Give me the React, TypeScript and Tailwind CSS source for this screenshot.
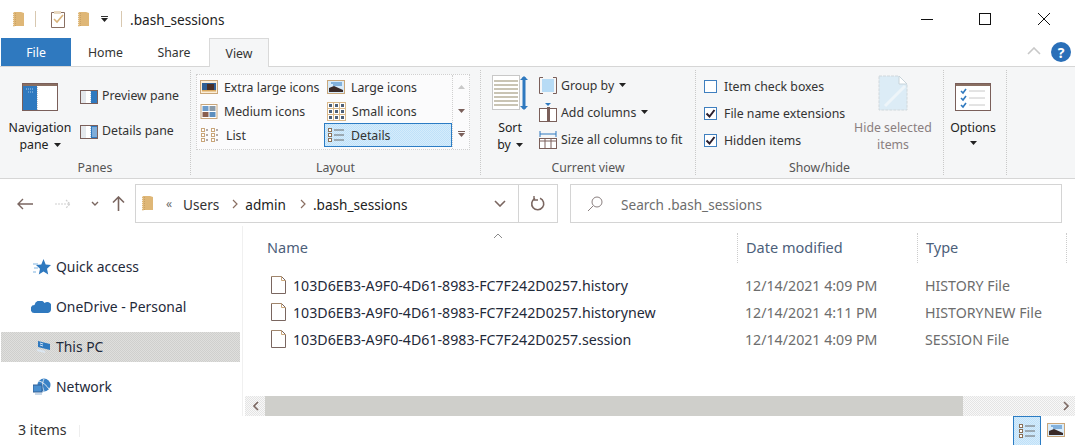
import React from "react";

const Folder = ({ className = "" }: { className?: string }) => (
  <svg width="13" height="17" viewBox="0 0 13 17" className={className}>
    <path d="M1 1h8l3 1v13H3l-2 1z" fill="#dfb777" />
    <path d="M1.5 1v15" stroke="#f3e7d2" strokeWidth="1" strokeDasharray="1 1" />
    <path d="M3.5 2v13" stroke="#c9a267" strokeWidth="1" strokeDasharray="1 1" />
  </svg>
);

const Caret = ({ className = "", color = "#222" }: { className?: string; color?: string }) => (
  <svg width="7" height="4" viewBox="0 0 7 4" className={className}>
    <path d="M0 0h7L3.5 4z" fill={color} />
  </svg>
);

const FileIcon = () => (
  <svg width="15" height="18" viewBox="0 0 15 18" className="shrink-0">
    <path d="M.5.5h10l4 4v13H.5z" fill="#fff" stroke="#7a6660" />
    <path d="M.5.5h10" stroke="#c9a67a" strokeDasharray="1 1" />
    <path d="M10.5.5v4h4" fill="none" stroke="#c9a67a" />
  </svg>
);

const PaneIcon = ({ details }: { details?: boolean }) => (
  <svg width="18" height="14" viewBox="0 0 18 14" className="shrink-0">
    <rect x=".5" y=".5" width="17" height="13" fill="#fff" stroke="#7a5f5a" />
    <rect x="1" y="1" width="5" height="12" fill="#e4e8ec" />
    <rect x="11" y="1" width="6" height="12" fill="#2f79bf" />
    <path d="M10.5 1v12" stroke="#b9cfe4" strokeDasharray="1 1" />
    {details && <path d="M12 3h5M12 5h5M12 7h5M12 9h5M12 11h5" stroke="#cfe2f4" />}
  </svg>
);

const ViewThumb = ({ kind }: { kind: "xl" | "lg" | "md" | "sm" | "list" | "details" }) => {
  if (kind === "xl" || kind === "lg")
    return (
      <svg width="18" height="14" viewBox="0 0 18 14" className="shrink-0">
        <rect x=".5" y=".5" width="17" height="13" fill={kind === "xl" ? "#fbeed9" : "#d8ebfa"} stroke="#c9a67a" />
        {kind === "xl" ? (
          <>
            <rect x="2" y="3" width="14" height="8" fill="#2f5f96" />
            <rect x="7" y="4" width="7" height="7" fill="#4a3028" />
            <rect x="2" y="10" width="14" height="1.5" fill="#d9a85f" />
          </>
        ) : (
          <>
            <path d="M2 8l5-2 9 4v2H2z" fill="#3a2a28" />
            <path d="M4 3h11M6 5h9" stroke="#2f79bf" />
          </>
        )}
      </svg>
    );
  if (kind === "md")
    return (
      <svg width="18" height="15" viewBox="0 0 17 15" className="shrink-0">
        <rect x=".5" y=".5" width="16" height="14" fill="#fff" stroke="#c9a67a" />
        <rect x="2" y="2" width="6" height="5" fill="#6d9ccb" />
        <rect x="9" y="2" width="6" height="5" fill="#8a9aa8" />
        <rect x="2" y="8" width="6" height="5" fill="#8a5f4d" />
        <rect x="9" y="8" width="6" height="5" fill="#5d8fbf" />
      </svg>
    );
  if (kind === "sm")
    return (
      <svg width="19" height="19" viewBox="0 0 19 19" className="shrink-0">
        <rect x=".5" y=".5" width="18" height="18" fill="#fff" stroke="#d9b88a" />
        <path d="M6.5 1v17M12.5 1v17M1 6.5h17M1 12.5h17" stroke="#d9b88a" />
        {[3, 9, 15].map((x) =>
          [3, 9, 15].map((y) => <rect key={`${x}${y}`} x={x - 1} y={y - 1} width="3" height="3" fill="#4d5f78" />)
        )}
      </svg>
    );
  if (kind === "list")
    return (
      <svg width="20" height="16" viewBox="0 0 20 16" className="shrink-0">
        {[1, 11].map((x) =>
          [1, 6, 11].map((y) => (
            <g key={`${x}${y}`}>
              <rect x={x + 0.5} y={y + 0.5} width="3" height="3" fill="#fff" stroke="#c9a67a" />
              <path d={`M${x + 5} ${y + 2}h2`} stroke="#6b5a55" />
            </g>
          ))
        )}
      </svg>
    );
  return (
    <svg width="18" height="16" viewBox="0 0 18 16" className="shrink-0">
      {[1, 6, 11].map((y) => (
        <g key={y}>
          <rect x="1.5" y={y + 0.5} width="3" height="3" fill="#fff" stroke="#8a6f55" />
          <path d={`M7 ${y + 2}h10`} stroke="#6b6b6b" />
        </g>
      ))}
    </svg>
  );
};

const Check = ({ on }: { on?: boolean }) => (
  <span className="w-[13px] h-[13px] border border-[#3f7fbf] bg-white flex items-center justify-center shrink-0">
    {on && (
      <svg width="11" height="11" viewBox="0 0 11 11">
        <path d="M1.5 5.5l3 3 5-6.5" fill="none" stroke="#2b1f2e" strokeWidth="2" />
      </svg>
    )}
  </span>
);

const Group = ({ w, label, children }: { w: string; label: string; children: React.ReactNode }) => (
  <section className={`${w} flex flex-col shrink-0 border-r border-dotted border-[#c9c9c9] h-[105px] mt-[3px]`}>
    <div className="h-[87px] flex">{children}</div>
    <div className="text-center text-[#555] leading-[14px] pt-[5px]">{label}</div>
  </section>
);

const BigBtn = ({ icon, lines, caret, tone = "text-[#222]", w }: { icon: React.ReactNode; lines: string[]; caret?: boolean; tone?: string; w: string }) => (
  <div className={`${w} flex flex-col items-center shrink-0 pt-[3px] ${tone}`}>
    <div className="h-[40px] flex items-center justify-center mb-[6px]">{icon}</div>
    {lines.map((l, i) => (
      <div key={l} className="leading-[17px] whitespace-nowrap flex items-center gap-[5px]">
        {l}
        {caret && i === lines.length - 1 && <Caret />}
      </div>
    ))}
  </div>
);

const SmallRow = ({ icon, text, caret }: { icon: React.ReactNode; text: string; caret?: boolean }) => (
  <div className="flex items-center gap-[4px] h-[27px] whitespace-nowrap">
    {icon}
    <span className="text-[#333]">{text}</span>
    {caret && <Caret className="ml-[1px] -mt-[3px]" />}
  </div>
);

const GalleryItem = ({ kind, text, w, sel }: { kind: any; text: string; w: string; sel?: boolean }) => (
  <div
    className={`${w} h-[24px] flex items-center gap-[6px] whitespace-nowrap text-[#333] ${
      sel ? "pl-[2px] border border-[#2b7cc4] bg-[repeating-conic-gradient(#bfe1f9_0_25%,#d6ecfb_0_50%)] bg-[length:2px_2px]" : "pl-[3px]"
    }`}
  >
    <ViewThumb kind={kind} />
    <span className="pt-[2px]">{text}</span>
  </div>
);

const NavItem = ({ icon, text, sel }: { icon: React.ReactNode; text: string; sel?: boolean }) => (
  <div
    className={`h-[30px] mb-[10px] flex items-center ml-[1px] w-[239px] ${
      sel ? "bg-[repeating-conic-gradient(#cfcfcd_0_25%,#dfdfdd_0_50%)] bg-[length:2px_2px]" : ""
    }`}
  >
    <span className="w-[55px] flex justify-end pr-[5px] shrink-0">{icon}</span>
    <span className="text-[#1f2a3a] whitespace-nowrap text-[13.9px]">{text}</span>
  </div>
);

const rows = [
  ["103D6EB3-A9F0-4D61-8983-FC7F242D0257.history", "12/14/2021 4:09 PM", "HISTORY File"],
  ["103D6EB3-A9F0-4D61-8983-FC7F242D0257.historynew", "12/14/2021 4:11 PM", "HISTORYNEW File"],
  ["103D6EB3-A9F0-4D61-8983-FC7F242D0257.session", "12/14/2021 4:09 PM", "SESSION File"],
];

export default function App() {
  return (
    <div className="w-[1075px] h-[445px] overflow-hidden bg-white text-[14.2px] font-['Noto_Sans','Open_Sans',sans-serif] flex flex-col">
      {/* Title bar */}
      <header className="h-[38px] flex items-center shrink-0">
        <Folder className="ml-[12px]" />
        <span className="ml-[10px] w-px h-[16px] bg-[#d8c8b0]" />
        <svg width="16" height="18" viewBox="0 0 16 18" className="ml-[14px]">
          <path d="M1.5 2.5h13v15h-13z" fill="#fff" stroke="#8a6f62" />
          <path d="M4 1h7v3H4z" fill="#e8d8c0" />
          <path d="M4 9l3 3 6-7" fill="none" stroke="#d9b37a" strokeWidth="1.6" />
        </svg>
        <Folder className="ml-[11px]" />
        <span className="ml-[11px] flex flex-col items-center gap-[1px]">
          <span className="w-[7px] h-px bg-[#333]" />
          <Caret />
        </span>
        <span className="ml-[13px] w-px h-[16px] bg-[#d8c8b0]" />
        <span className="ml-[8px] text-[#222] text-[13.6px] pt-[3px]">.bash_sessions</span>
        <span className="flex-1" />
        <span className="w-[12px] h-px bg-[#111] mr-[46px]" />
        <span className="w-[12px] h-[12px] border border-[#111] mr-[47px]" />
        <svg width="12" height="12" viewBox="0 0 12 12" className="mr-[25px]">
          <path d="M0 0l12 12M12 0L0 12" stroke="#111" strokeWidth="1" />
        </svg>
      </header>

      {/* Tabs */}
      <nav className="h-[28px] flex shrink-0 relative z-10 text-[12.3px]">
        <div className="ml-[1px] w-[70px] bg-[#2f79bf] text-white flex items-center justify-center pt-[2px]">File</div>
        <div className="w-[67px] flex items-center justify-center text-[#333] ml-[1px] pt-[2px]">Home</div>
        <div className="w-[70px] flex items-center justify-center text-[#333] pt-[2px]">Share</div>
        <div className="w-[60px] h-[29px] bg-[#f5f6f7] border-x border-t border-[#d9d9d9] flex items-center justify-center text-[#333] pt-[2px]">View</div>
        <span className="flex-1" />
        <svg width="14" height="8" viewBox="0 0 14 8" className="mt-[9px] mr-[10px]">
          <path d="M1 7l6-6 6 6" fill="none" stroke="#c8c8c8" strokeWidth="1.6" />
        </svg>
        <span className="w-[20px] h-[20px] mt-[4px] mr-[4px] rounded-full bg-[#2a6fb8] text-white text-[14px] font-bold flex items-center justify-center">?</span>
      </nav>

      {/* Ribbon */}
      <div className="h-[113px] shrink-0 bg-[#f5f6f7] border-y border-[#d6d6d6] flex text-[12.3px]">
        <Group w="w-[191px]" label="Panes">
          <BigBtn
            w="w-[80px]"
            lines={["Navigation", "pane"]}
            caret
            icon={
              <svg width="36" height="28" viewBox="0 0 36 28" className="mt-[8px]">
                <rect x=".5" y=".5" width="35" height="27" fill="#fff" stroke="#7a5f5a" />
                <rect x="1" y="1" width="34" height="2" fill="#8a6f62" />
                <rect x="1" y="3" width="14" height="24" fill="#2f79bf" />
                <path d="M15.5 4v23" stroke="#c9c9c9" strokeDasharray="1 1" />
                <path d="M4 6h8M6 9h5" stroke="#a9cdee" strokeDasharray="1 1" />
              </svg>
            }
          />
          <div className="pt-[9px] flex flex-col">
            <div className="h-[35px] flex items-center gap-[4px] whitespace-nowrap text-[#333]"><PaneIcon /> Preview pane</div>
            <div className="h-[35px] flex items-center gap-[4px] whitespace-nowrap text-[#333]"><PaneIcon details /> Details pane</div>
          </div>
        </Group>

        <Group w="w-[290px]" label="Layout">
          <div className="ml-[5px] mt-[4px] w-[274px] h-[76px] border border-dotted border-[#d0d0d0] bg-[#fbfbfc] flex">
            <div className="flex flex-wrap w-[255px] content-start">
              <GalleryItem kind="xl" text="Extra large icons" w="w-[127px]" />
              <GalleryItem kind="lg" text="Large icons" w="w-[128px]" />
              <GalleryItem kind="md" text="Medium icons" w="w-[127px]" />
              <GalleryItem kind="sm" text="Small icons" w="w-[128px]" />
              <GalleryItem kind="list" text="List" w="w-[127px]" />
              <GalleryItem kind="details" text="Details" w="w-[128px]" sel />
            </div>
            <div className="flex-1 flex flex-col items-center border-l border-dotted border-[#d0d0d0] pt-[10px]">
              <svg width="7" height="4" viewBox="0 0 7 4" className="mb-[20px]"><path d="M3.5 0L7 4H0z" fill="#c8c8c8" /></svg>
              <Caret className="mb-[18px]" color="#7a5f5a" />
              <span className="w-[7px] h-px bg-[#7a5f5a]" />
              <Caret className="mt-[1px]" color="#7a5f5a" />
            </div>
          </div>
        </Group>

        <Group w="w-[215px]" label="Current view">
          <BigBtn
            w="w-[58px]"
            lines={["Sort", "by"]}
            caret
            icon={
              <svg width="36" height="36" viewBox="0 0 36 36">
                <rect x=".5" y=".5" width="27" height="34" fill="#fff" stroke="#c8c8c8" />
                <path d="M2 6h24M2 10h24M2 14h24M2 18h24M2 22h24M2 26h24M2 30h24" stroke="#c9c4b4" strokeWidth="2" />
                <path d="M32 2v32" stroke="#2f79bf" strokeWidth="3" />
                <path d="M28 5l4-4 4 4zM28 31l4 4 4-4z" fill="#2f79bf" />
              </svg>
            }
          />
          <div className="pt-[3px]">
            <SmallRow
              text="Group by"
              caret
              icon={
                <svg width="18" height="17" viewBox="0 0 18 17" className="-mt-[2px]">
                  <rect x="3" y="2" width="12" height="13" fill="#b7dbf5" />
                  <path d="M4 .5H.5v16H4M14 .5h3.5v16H14" fill="none" stroke="#7a5f5a" />
                </svg>
              }
            />
            <SmallRow
              text="Add columns"
              caret
              icon={
                <svg width="18" height="19" viewBox="0 0 18 19" className="-mt-[2px]">
                  <path d="M6 0h6l-3 3z" fill="#2f79bf" />
                  <rect x=".5" y="5.5" width="17" height="13" fill="#fff" stroke="#7a5f5a" />
                  <rect x="8" y="4" width="3" height="15" fill="#7a5f5a" />
                </svg>
              }
            />
            <SmallRow
              text="Size all columns to fit"
              icon={
                <svg width="18" height="19" viewBox="0 0 18 19" className="-mt-[2px]">
                  <path d="M1 4h16M1 1v6M17 1v6" stroke="#2f79bf" />
                  <rect x=".5" y="8.5" width="17" height="10" fill="#fff" stroke="#7a5f5a" />
                  <path d="M1 11h16M6 9v9M12 9v9" stroke="#7a5f5a" />
                </svg>
              }
            />
          </div>
        </Group>

        <Group w="w-[248px]" label="Show/hide">
          <div className="pl-[8px] pr-[8px] pt-[4px] w-[158px] shrink-0">
            {[["Item check boxes", false], ["File name extensions", true], ["Hidden items", true]].map(([t, on]) => (
              <div key={t as string} className="h-[27px] flex items-center gap-[7px] whitespace-nowrap text-[#333]">
                <span className="-mt-[2px]"><Check on={on as boolean} /></span>
                {t as string}
              </div>
            ))}
          </div>
          <BigBtn
            w="w-[78px]"
            tone="text-[#8a7f7f]"
            lines={["Hide selected", "items"]}
            icon={
              <svg width="30" height="36" viewBox="0 0 30 36">
                <path d="M1 1h20l8 8v26H1z" fill="#dcecf6" stroke="#d0d8dc" strokeDasharray="3 1" />
                <path d="M21 1v8h8z" fill="#fff" stroke="#c8d4da" />
                <path d="M7 31L27 11" stroke="#eef5f9" strokeWidth="3" />
              </svg>
            }
          />
        </Group>

        <Group w="w-[63px]" label="">
          <div className="w-[58px] flex flex-col items-center pt-[3px]">
            <div className="h-[40px] flex items-center mb-[6px]">
              <svg width="36" height="28" viewBox="0 0 36 28" className="mt-[8px]">
                <rect x=".5" y=".5" width="35" height="27" fill="#fff" stroke="#7a5f5a" />
                <rect x="1" y="1" width="34" height="2" fill="#8a6f62" />
                <path d="M6 8l2 2 3-4M6 15l2 2 3-4M6 22l2 2 3-4" fill="none" stroke="#2f79bf" strokeWidth="1.6" />
                <path d="M14 8h16M14 15h16M14 22h16" stroke="#c8c8c8" />
              </svg>
            </div>
            <div className="leading-[17px] text-[#222]">Options</div>
            <Caret className="mt-[5px]" />
          </div>
        </Group>
      </div>

      {/* Address row */}
      <div className="h-[47px] flex items-center shrink-0 pt-[2px] text-[13.6px]">
        <svg width="16" height="12" viewBox="0 0 16 12" className="ml-[17px]"><path d="M6 1L1 6l5 5M1 6h15" fill="none" stroke="#7a6660" strokeWidth="1.4" /></svg>
        <svg width="16" height="10" viewBox="0 0 16 10" className="ml-[22px]"><path d="M11 1l4 4-4 4M0 5h15" fill="none" stroke="#cfcfcf" strokeWidth="1.2" strokeDasharray="2 1" /></svg>
        <svg width="8" height="5" viewBox="0 0 8 5" className="ml-[20px]"><path d="M1 1l3 3 3-3" fill="none" stroke="#7a6660" strokeWidth="1.4" /></svg>
        <svg width="13" height="15" viewBox="0 0 13 15" className="ml-[13px]"><path d="M1 6.5l5.5-5.5 5.5 5.5M6.5 1v14" fill="none" stroke="#7a6660" strokeWidth="1.6" /></svg>
        <div className="ml-[10px] w-[423px] h-[39px] border border-[#d4d4d4] flex items-center">
          <Folder className="ml-[5px]" />
          <span className="ml-[12px] text-[#6a6a6a] text-[12px]">«</span>
          <span className="ml-[11px] text-[#333] pt-[3px]">Users</span>
          <svg width="6" height="10" viewBox="0 0 6 10" className="ml-[13px]"><path d="M1 1l4 4-4 4" fill="none" stroke="#8a6f62" strokeWidth="1.2" /></svg>
          <span className="ml-[7px] text-[#222] pt-[3px]">admin</span>
          <svg width="6" height="10" viewBox="0 0 6 10" className="ml-[14px]"><path d="M1 1l4 4-4 4" fill="none" stroke="#8a6f62" strokeWidth="1.2" /></svg>
          <span className="ml-[7px] text-[#222] pt-[3px]">.bash_sessions</span>
          <span className="flex-1" />
          <svg width="12" height="7" viewBox="0 0 12 7" className="mr-[12px]"><path d="M1 1l5 5 5-5" fill="none" stroke="#7a6660" strokeWidth="1.6" /></svg>
          <span className="w-[39px] h-full border-l border-[#d4d4d4] flex items-center justify-center">
            <svg width="16" height="16" viewBox="0 0 16 16"><path d="M10 2.2a6 6 0 1 1-5 .2" fill="none" stroke="#7a6660" strokeWidth="1.6" /><path d="M4 0v4h4" fill="none" stroke="#7a6660" strokeWidth="1.4" /></svg>
          </span>
        </div>
        <div className="ml-[12px] w-[492px] h-[39px] border border-[#d4d4d4] flex items-center">
          <svg width="16" height="16" viewBox="0 0 16 16" className="ml-[16px]"><circle cx="10" cy="6" r="5" fill="none" stroke="#8a7f7f" /><path d="M6 10l-5 5" stroke="#8a7f7f" /></svg>
          <span className="ml-[18px] text-[#6d6d6d] pt-[3px]">Search .bash_sessions</span>
        </div>
      </div>

      {/* Body */}
      <div className="flex h-[190px] shrink-0">
        <aside className="w-[243px] shrink-0 border-r border-[#f0f0f0] pt-[26px]">
          <NavItem
            text="Quick access"
            icon={
              <svg width="18" height="17" viewBox="0 0 18 17">
                <path d="M10.5 0l2.2 5.4 5.3.6-4 3.8 1.2 5.7-4.7-2.9-4.7 2.9 1.2-5.7-4-3.8 5.3-.6z" fill="#2f79bf" />
                <path d="M0 5h5M1 9h4M0 13h3" stroke="#7fb3e0" />
              </svg>
            }
          />
          <NavItem
            text="OneDrive - Personal"
            icon={<svg width="20" height="12" viewBox="0 0 20 12"><path d="M4 12a4 4 0 0 1-.5-8A5.5 5.5 0 0 1 13.5 2 4.5 4.5 0 0 1 20 8a4 4 0 0 1-3 4z" fill="#2f79bf" /></svg>}
          />
          <NavItem
            sel
            text="This PC"
            icon={
              <svg width="15" height="14" viewBox="0 0 15 14">
                <path d="M2 1l12 3v6L2 7z" fill="#2f79bf" />
                <path d="M4 3l3 1M4 5l3 1" stroke="#cfe2f4" />
                <path d="M1 10l8 2" stroke="#dbe6f0" strokeWidth="2" />
              </svg>
            }
          />
          <NavItem
            text="Network"
            icon={
              <svg width="18" height="18" viewBox="0 0 18 18">
                <circle cx="11" cy="7" r="6.5" fill="#3a82c6" />
                <path d="M6 3c4 1 8 5 10 8M11 1c-2 4-2 8 0 12" stroke="#dbe6f0" fill="none" />
                <rect x="0" y="7" width="9" height="7" fill="#4a8fcf" stroke="#2f5f96" />
                <rect x="2" y="15" width="7" height="2" fill="#c8d8e8" />
              </svg>
            }
          />
        </aside>

        <main className="flex-1 min-w-0 flex flex-col relative">
          <svg width="10" height="6" viewBox="0 0 10 6" className="absolute left-[250px] top-[7px]"><path d="M1 5l4-4 4 4" fill="none" stroke="#8a8a8a" /></svg>
          <div className="h-[30px] mt-[7px] flex items-center text-[#4c607a] shrink-0 text-[14.5px]">
            <span className="w-[494px] pl-[24px] h-full flex items-center">Name</span>
            <span className="w-[180px] pl-[8px] h-full flex items-center border-l border-dotted border-[#ccc]">Date modified</span>
            <span className="w-[150px] pl-[8px] h-full flex items-center border-x border-dotted border-[#ccc]">Type</span>
          </div>
          <div className="flex-1 pt-[9px]">
            {rows.map(([name, date, type]) => (
              <div key={name} className="h-[27px] flex items-center whitespace-nowrap">
                <span className="w-[494px] pl-[28px] flex items-center gap-[7px] text-[#1f2a3a]">
                  <FileIcon />
                  {name}
                </span>
                <span className="w-[180px] pl-[8px] text-[#6d6d6d]">{date}</span>
                <span className="pl-[8px] text-[#6d6d6d]">{type}</span>
              </div>
            ))}
          </div>
          <div className="h-[20px] flex shrink-0 ml-[2px]">
            <span className="w-[20px] flex items-center justify-center bg-[repeating-conic-gradient(#e4e4e4_0_25%,#f8f8f8_0_50%)] bg-[length:2px_2px]">
              <svg width="7" height="10" viewBox="0 0 7 10"><path d="M6 1L2 5l4 4" fill="none" stroke="#7a6660" strokeWidth="1.6" /></svg>
            </span>
            <span className="w-[698px] bg-[#cfcfcb]" />
            <span className="flex-1 flex items-center justify-end pr-[5px] bg-[repeating-conic-gradient(#e4e4e4_0_25%,#f8f8f8_0_50%)] bg-[length:2px_2px]">
              <svg width="7" height="10" viewBox="0 0 7 10"><path d="M1 1l4 4-4 4" fill="none" stroke="#7a6660" strokeWidth="1.6" /></svg>
            </span>
          </div>
        </main>
      </div>

      {/* Status */}
      <footer className="h-[30px] flex items-center shrink-0">
        <span className="ml-[18px] text-[#333] -mt-[2px]">3 items</span>
        <span className="ml-[12px] w-px h-[12px] bg-[#eee]" />
        <span className="flex-1" />
        <span className="w-[28px] h-[30px] border border-[#2b7cc4] bg-[repeating-conic-gradient(#bfe1f9_0_25%,#d6ecfb_0_50%)] bg-[length:2px_2px] flex items-center justify-center">
          <ViewThumb kind="details" />
        </span>
        <span className="ml-[6px] mr-[10px] mb-[3px]"><ViewThumb kind="lg" /></span>
      </footer>
    </div>
  );
}
